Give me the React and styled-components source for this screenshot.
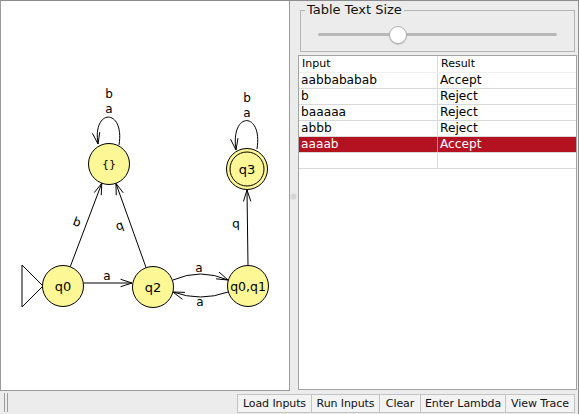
import React from 'react';
import styled, { createGlobalStyle } from 'styled-components';

const GlobalStyle = createGlobalStyle`
  html, body { margin: 0; padding: 0; }
  body {
    background: #ececec;
    font-family: "DejaVu Sans", "Liberation Sans", sans-serif;
    color: #000;
  }
`;

const Window = styled.div`
  width: 579px;
  height: 414px;
  box-sizing: border-box;
  border-top: 1px solid #8d8d8d;
  border-right: 1px solid #8d8d8d;
  background: #ececec;
  display: grid;
  grid-template-rows: 390px 23px;
  overflow: hidden;
`;

const Workspace = styled.div`
  display: flex;
  min-height: 0;
`;

const Canvas = styled.div`
  width: 290px;
  flex: none;
  box-sizing: border-box;
  background: #fff;
  border: 1px solid #9b9b9b;
  border-top: none;
  svg { display: block; }
`;

const Splitter = styled.div`
  width: 8px;
  flex: none;
  display: flex;
  align-items: center;
  justify-content: center;
`;

const SplitDot = styled.span`
  width: 5px;
  height: 5px;
  margin-right: 1px;
  border-radius: 50%;
  background: #d4d4d4;
  border: 1px solid #e2e2e2;
`;

const SidePanel = styled.div`
  flex: 1;
  min-width: 0;
  display: flex;
  flex-direction: column;
  padding: 0 1px 1px 0;
`;

const Group = styled.fieldset`
  margin: 0 2px;
  padding: 0 4px 7px;
  border: 1px solid #b4b4b4;
  min-width: 0;
`;

const GroupTitle = styled.legend`
  padding: 0 2px;
  font-size: 13px;
  line-height: 18px;
  color: #111;
`;

const SliderRow = styled.div`
  padding: 7px 13px 0;
`;

const SliderTrack = styled.div`
  position: relative;
  height: 18px;
  &::before {
    content: "";
    position: absolute;
    left: 0;
    right: 0;
    top: 7px;
    height: 3px;
    border-radius: 2px;
    background: #b9b9b9;
  }
`;

const SliderThumb = styled.span`
  position: absolute;
  top: 0;
  left: calc(${p => p.$pos * 100}% - 9px);
  width: 16px;
  height: 16px;
  border-radius: 50%;
  background: #fff;
  border: 1px solid #b0b0b0;
  box-shadow: 0 1px 1px rgba(0, 0, 0, 0.15);
`;

const Table = styled.div`
  flex: 1;
  margin-top: 3px;
  background: #fff;
  border: 1px solid #a3a3a3;
`;

const Row = styled.div`
  display: grid;
  grid-template-columns: 139px 1fr;
  height: ${p => (p.$head ? 17 : 16)}px;
  box-sizing: border-box;
  border-bottom: 1px solid ${p => (p.$head ? '#efefef' : '#d9d9d9')};
  background: ${p => (p.$selected ? '#b51221' : 'transparent')};
  color: ${p => (p.$selected ? '#fff' : '#000')};
`;

const Cell = styled.div`
  padding-left: ${p => (p.$head ? 3 : 2)}px;
  font-size: ${p => (p.$head ? 11 : 12.2)}px;
  line-height: 15px;
  white-space: nowrap;
  overflow: hidden;
  &:first-child {
    border-right: 1px solid ${p => (p.$selected ? '#d07c84' : '#d9d9d9')};
  }
`;

const BottomBar = styled.div`
  display: flex;
  align-items: flex-start;
  padding: 3px 3px 0 4px;
`;

const Grip = styled.div`
  width: 4px;
  height: 19px;
  border-left: 1px solid #9c9c9c;
  border-right: 1px solid #9c9c9c;
  box-sizing: border-box;
  margin-top: -1px;
`;

const ButtonGroup = styled.div`
  margin-left: auto;
  display: flex;
`;

const Button = styled.button`
  width: ${p => p.$w}px;
  height: 19px;
  padding: 0;
  margin: 0;
  box-sizing: border-box;
  font-family: "DejaVu Sans", sans-serif;
  font-size: 11px;
  letter-spacing: -0.1px;
  white-space: nowrap;
  color: #111;
  background: #f3f3f3;
  border: 1px solid #c3c3c3;
  border-radius: 0;
  & + & { margin-left: -1px; }
`;

const FILL = '#fdf796';
const FONT = '"DejaVu Sans", sans-serif';

const head = (x, y, ang, len = 12, spread = 18) => {
  const r = Math.PI / 180;
  const a1 = (ang + 180 - spread) * r;
  const a2 = (ang + 180 + spread) * r;
  return `M ${x + len * Math.cos(a1)} ${y + len * Math.sin(a1)} L ${x} ${y} L ${x + len * Math.cos(a2)} ${y + len * Math.sin(a2)}`;
};

const nodes = [
  { x: 109, y: 164, label: '{}', size: 11 },
  { x: 247, y: 169, label: 'q3', final: true },
  { x: 63, y: 286, label: 'q0' },
  { x: 153, y: 287, label: 'q2' },
  { x: 248, y: 286, label: 'q0,q1', size: 12.5 },
];

const edges = [
  { d: 'M 84 283 L 132 283', h: [132, 283, 0] },
  { d: 'M 70.2 266.8 L 101.8 183.2', h: [101.8, 183.2, -69.3] },
  { d: 'M 146.1 267.7 L 115.9 183.3', h: [115.9, 183.3, -109.7] },
  { d: 'M 248 265.5 L 247 190', h: [247, 190, -90.8] },
  { d: 'M 173 280 Q 200.5 268 228 280', h: [228, 280, 23.6] },
  { d: 'M 228 292 Q 200.5 302 173 292', h: [173, 292, -160] },
  { d: 'M 119 145 C 125 108, 92 108, 98 144', h: [98, 144, 80.5] },
  { d: 'M 257 149 C 263 111, 230 111, 236 150', h: [236, 150, 81.3] },
];

const labels = [
  { x: 107, y: 276, t: 'a' },
  { x: 199, y: 268, t: 'a' },
  { x: 200, y: 302, t: 'a' },
  { x: 109, y: 94, t: 'b' },
  { x: 109, y: 109, t: 'a' },
  { x: 247, y: 98, t: 'b' },
  { x: 247, y: 113, t: 'a' },
  { x: 77, y: 222, t: 'b', rot: 20.7 },
  { x: 120, y: 227, t: 'b', rot: 160.3 },
  { x: 236, y: 225, t: 'b', rot: 179.2 },
];

function Diagram() {
  return (
    <svg width="288" height="389" viewBox="1 1 288 389" fontFamily={FONT}>
      <polygon points="22,265 22,307 43,286" fill="#fff" stroke="#000" strokeWidth="1" />
      {edges.map((e, i) => (
        <g key={i} fill="none" stroke="#000" strokeWidth="1">
          <path d={e.d} />
          <path d={head(...e.h)} />
        </g>
      ))}
      {labels.map((l, i) => (
        <text
          key={i}
          x={l.x}
          y={l.y}
          fontSize="12"
          textAnchor="middle"
          dominantBaseline="central"
          transform={l.rot ? `rotate(${l.rot} ${l.x} ${l.y})` : undefined}
        >
          {l.t}
        </text>
      ))}
      {nodes.map((n, i) => (
        <g key={i}>
          <circle cx={n.x} cy={n.y} r="20.5" fill={FILL} stroke="#000" strokeWidth="1" />
          {n.final && <circle cx={n.x} cy={n.y} r="17" fill="none" stroke="#000" strokeWidth="1" />}
          <text
            x={n.x}
            y={n.y}
            fontSize={n.size || 13}
            textAnchor="middle"
            dominantBaseline="central"
          >
            {n.label}
          </text>
        </g>
      ))}
    </svg>
  );
}

const rows = [
  ['aabbababab', 'Accept'],
  ['b', 'Reject'],
  ['baaaaa', 'Reject'],
  ['abbb', 'Reject'],
  ['aaaab', 'Accept', true],
  ['', ''],
];

const buttons = [
  ['Load Inputs', 75],
  ['Run Inputs', 69],
  ['Clear', 42],
  ['Enter Lambda', 86],
  ['View Trace', 70],
];

export default function App() {
  return (
    <>
      <GlobalStyle />
      <Window>
        <Workspace>
          <Canvas>
            <Diagram />
          </Canvas>
          <Splitter>
            <SplitDot />
          </Splitter>
          <SidePanel>
            <Group>
              <GroupTitle>Table Text Size</GroupTitle>
              <SliderRow>
                <SliderTrack>
                  <SliderThumb $pos={0.335} />
                </SliderTrack>
              </SliderRow>
            </Group>
            <Table>
              <Row $head>
                <Cell $head>Input</Cell>
                <Cell $head>Result</Cell>
              </Row>
              {rows.map(([a, b, sel], i) => (
                <Row key={i} $selected={sel}>
                  <Cell $selected={sel}>{a}</Cell>
                  <Cell $selected={sel}>{b}</Cell>
                </Row>
              ))}
            </Table>
          </SidePanel>
        </Workspace>
        <BottomBar>
          <Grip />
          <ButtonGroup>
            {buttons.map(([t, w]) => (
              <Button key={t} $w={w}>{t}</Button>
            ))}
          </ButtonGroup>
        </BottomBar>
      </Window>
    </>
  );
}
